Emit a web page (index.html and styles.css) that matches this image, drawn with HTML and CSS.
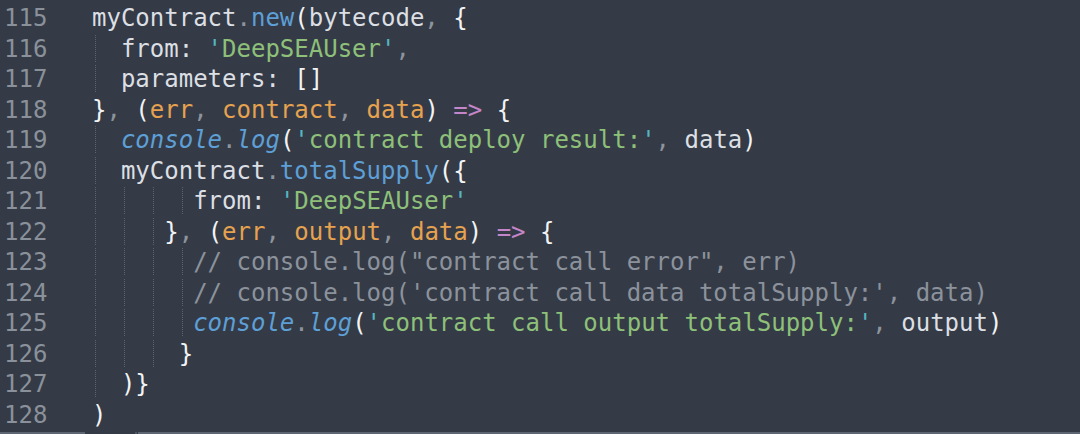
FILE: index.html
```html
<!DOCTYPE html>
<html>
<head>
<meta charset="utf-8">
<link rel="stylesheet" href="styles.css">
</head>
<body>
<div class="editor">
  <div class="gutter">
    <div class="ln">115</div><div class="ln">116</div><div class="ln">117</div><div class="ln">118</div><div class="ln">119</div><div class="ln">120</div><div class="ln">121</div><div class="ln">122</div><div class="ln">123</div><div class="ln">124</div><div class="ln">125</div><div class="ln">126</div><div class="ln">127</div><div class="ln">128</div>
  </div>
  <div class="code">
<div class="line">myContract<span class="p">.</span><span class="fn">new</span><span class="br">(</span>bytecode<span class="p">,</span> <span class="br">{</span></div>
<div class="line"><span class="ig">  </span>from: <span class="q">'</span><span class="s">DeepSEAUser</span><span class="q">'</span><span class="p">,</span></div>
<div class="line"><span class="ig">  </span>parameters: <span class="br">[]</span></div>
<div class="line"><span class="br">}</span><span class="p">,</span> <span class="br">(</span><span class="a">err</span><span class="p">,</span> <span class="a">contract</span><span class="p">,</span> <span class="a">data</span><span class="br">)</span> <span class="op">=&gt;</span> <span class="br">{</span></div>
<div class="line"><span class="ig">  </span><span class="fn it">console</span><span class="p">.</span><span class="fn it">log</span><span class="br">(</span><span class="q">'</span><span class="s">contract deploy result:</span><span class="q">'</span><span class="p">,</span> data<span class="br">)</span></div>
<div class="line"><span class="ig">  </span>myContract<span class="p">.</span><span class="fn">totalSupply</span><span class="br">({</span></div>
<div class="line"><span class="ig">  </span><span class="ig">  </span><span class="ig">  </span><span class="ig"> </span>from: <span class="q">'</span><span class="s">DeepSEAUser</span><span class="q">'</span></div>
<div class="line"><span class="ig">  </span><span class="ig">  </span><span class="ig"> </span><span class="br">}</span><span class="p">,</span> <span class="br">(</span><span class="a">err</span><span class="p">,</span> <span class="a">output</span><span class="p">,</span> <span class="a">data</span><span class="br">)</span> <span class="op">=&gt;</span> <span class="br">{</span></div>
<div class="line"><span class="ig">  </span><span class="ig">  </span><span class="ig">  </span><span class="ig"> </span><span class="c">// console.log("contract call error", err)</span></div>
<div class="line"><span class="ig">  </span><span class="ig">  </span><span class="ig">  </span><span class="ig"> </span><span class="c">// console.log('contract call data totalSupply:', data)</span></div>
<div class="line"><span class="ig">  </span><span class="ig">  </span><span class="ig">  </span><span class="ig"> </span><span class="fn it">console</span><span class="p">.</span><span class="fn it">log</span><span class="br">(</span><span class="q">'</span><span class="s">contract call output totalSupply:</span><span class="q">'</span><span class="p">,</span> output<span class="br">)</span></div>
<div class="line"><span class="ig">  </span><span class="ig">  </span><span class="ig">  </span><span class="br">}</span></div>
<div class="line"><span class="ig">  </span><span class="br">)}</span></div>
<div class="line"><span class="br">)</span></div>
  </div>
</div>
<div class="hbar">
  <div class="seg seg-left"></div>
  <div class="seg-gap"><span class="dot"></span></div>
  <div class="seg seg-right"></div>
</div>
</body>
</html>
```

FILE: styles.css
```css
html, body {
  margin: 0;
  padding: 0;
  background: #343b46;
  height: 434px;
  overflow: hidden;
}

.editor {
  display: flex;
  padding-top: 3px;
  font-family: "DejaVu Sans Mono", "Liberation Mono", monospace;
  font-size: 24px;
  line-height: 30.5px;
  color: #dcdfe4;
}

.gutter {
  width: 88px;
  padding-left: 4px;
  color: #8a919b;
}

.ln {
  height: 30.5px;
}

.code {
  flex: 1;
}

.line {
  height: 30.5px;
  white-space: pre;
}

.ig {
  background-image: repeating-linear-gradient(to bottom, rgba(140, 148, 160, 0.45) 0 1px, transparent 1px 2px);
  background-size: 1px 100%;
  background-position: 3px 0;
  background-repeat: no-repeat;
}

.p { color: #8e949d; }
.br { color: #f2f3f5; }
.fn { color: #5e9fd6; }
.it { font-style: italic; }
.s { color: #8ec07a; }
.q { color: #55b5c0; }
.a { color: #e6a24f; }
.op { color: #c486c8; }
.c { color: #8c929c; }

.hbar {
  display: flex;
  margin-top: 2px;
  height: 2px;
}

.seg {
  background: #5c6571;
}

.seg-left { width: 85px; }

.seg-gap {
  width: 53px;
  position: relative;
}

.dot {
  position: absolute;
  left: 50px;
  top: 0;
  width: 2px;
  height: 2px;
  background: #4f5763;
}

.seg-right { flex: 1; }
```
